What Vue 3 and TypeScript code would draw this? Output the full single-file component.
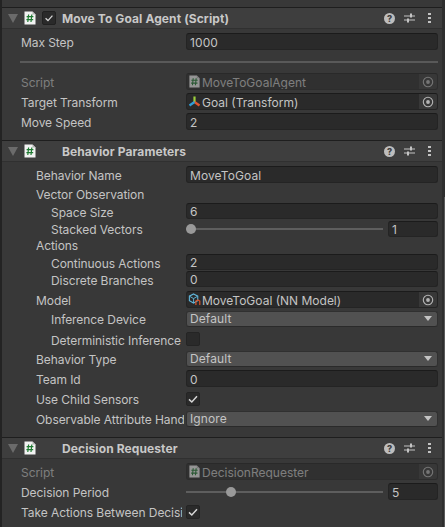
<template>
  <div class="inspector">
    <svg class="defs" width="0" height="0">
      <defs>
        <symbol id="script" viewBox="0 0 12 14">
          <path d="M0.5 0.5H8.5L11.5 3.5V13.5H0.5Z" fill="#f2f2f2" />
          <path d="M8.5 0.5V3.5H11.5Z" fill="#b5b5b5" />
          <path d="M4.6 3.5L3.8 11M7.8 3.5L7 11M2.6 5.7H9.4M2.4 8.7H9.2" stroke="#1f7a32" stroke-width="1.2" fill="none" />
        </symbol>
        <symbol id="target" viewBox="0 0 12 12">
          <circle cx="6" cy="6" r="4.7" fill="none" stroke="currentColor" stroke-width="1.1" />
          <circle cx="6" cy="6" r="1.9" fill="currentColor" />
        </symbol>
        <symbol id="transform" viewBox="0 0 13 13">
          <path d="M6.5 7V1.5" stroke="#9ccf3c" stroke-width="2.2" />
          <path d="M6.5 7L11.5 10.5" stroke="#e2562e" stroke-width="2.2" />
          <path d="M6.5 7L1.5 10.5" stroke="#2f9fd8" stroke-width="2.2" />
        </symbol>
        <symbol id="model" viewBox="0 0 14 14">
          <path d="M6 1L10.5 3.4V8.2L6 10.8L1.5 8.2V3.4Z" fill="none" stroke="#5fb4d8" stroke-width="1.2" />
          <path d="M1.5 3.4L6 6L10.5 3.4M6 6V10.8" fill="none" stroke="#5fb4d8" stroke-width="1" />
          <path d="M8.5 12.8V8.7L10.6 7.5L12.7 8.7V12.8" fill="none" stroke="#d9542b" stroke-width="1.3" />
        </symbol>
        <symbol id="sliders" viewBox="0 0 11 10">
          <path d="M0 3H11M0 7H11" stroke="#c4c4c4" stroke-width="1" />
          <path d="M7 0.5V4.5M4 5.5V9.5" stroke="#c4c4c4" stroke-width="2" />
        </symbol>
      </defs>
    </svg>

    <div class="content">
      <section v-for="comp in components" :key="comp.title" class="component" :class="comp.bodyClass">
        <header class="comp-header">
          <span class="fold"></span>
          <svg class="script-icon"><use href="#script" /></svg>
          <span class="enable">
            <svg v-if="comp.toggle" viewBox="0 0 14 14" class="tick"><path d="M3 7.4L5.8 10L11 4.2" /></svg>
          </span>
          <span class="title">{{ comp.title }}</span>
          <span class="help">?</span>
          <svg class="presets"><use href="#sliders" /></svg>
          <span class="menu"><i></i><i></i><i></i></span>
        </header>

        <div class="comp-body">
          <template v-for="row in comp.rows" :key="row.label">
            <div v-if="row.kind === 'sep'" class="sep"></div>
            <div v-else class="row" :class="[row.cls, 'k-' + row.kind, 'lv' + (row.level ?? comp.level), { dim: row.dim }]">
              <label class="label">{{ row.label }}</label>

              <div v-if="row.kind === 'input'" class="field">{{ row.value }}</div>

              <div v-else-if="row.kind === 'object'" class="field object">
                <svg class="obj-icon"><use :href="'#' + row.icon" /></svg>
                <span class="obj-name">{{ row.value }}</span>
                <span class="picker"><svg><use href="#target" /></svg></span>
              </div>

              <div v-else-if="row.kind === 'select'" class="select">
                <span>{{ row.value }}</span>
                <i class="caret"></i>
              </div>

              <div v-else-if="row.kind === 'check'" class="control">
                <span class="check">
                  <svg v-if="row.checked" viewBox="0 0 14 14" class="tick"><path d="M3 7.4L5.8 10L11 4.2" /></svg>
                </span>
              </div>

              <div v-else-if="row.kind === 'slider'" class="control slider">
                <div class="track">
                  <span class="thumb" :style="{ left: row.pos + 'px' }"></span>
                </div>
                <div class="field num">{{ row.value }}</div>
              </div>
            </div>
          </template>
        </div>
      </section>
    </div>

    <div class="scrollbar"><span class="scroll-thumb"></span></div>
  </div>
</template>

<script setup lang="ts">
type Row = {
  kind: 'input' | 'object' | 'select' | 'check' | 'slider' | 'heading' | 'sep'
  label: string
  value?: string
  icon?: string
  checked?: boolean
  pos?: number
  level?: number
  dim?: boolean
  cls?: string
}

type Comp = {
  title: string
  toggle: boolean
  level: number
  bodyClass: string
  rows: Row[]
}

const components: Comp[] = [
  {
    title: 'Move To Goal Agent (Script)',
    toggle: true,
    level: 0,
    bodyClass: 'agent',
    rows: [
      { kind: 'input', label: 'Max Step', value: '1000', cls: 'first' },
      { kind: 'sep', label: 'sep1' },
      { kind: 'object', label: 'Script', value: 'MoveToGoalAgent', icon: 'script', dim: true },
      { kind: 'object', label: 'Target Transform', value: 'Goal (Transform)', icon: 'transform' },
      { kind: 'input', label: 'Move Speed', value: '2' }
    ]
  },
  {
    title: 'Behavior Parameters',
    toggle: false,
    level: 1,
    bodyClass: 'behavior',
    rows: [
      { kind: 'input', label: 'Behavior Name', value: 'MoveToGoal', cls: 'first' },
      { kind: 'heading', label: 'Vector Observation' },
      { kind: 'input', label: 'Space Size', value: '6', level: 2, cls: 'sm m0' },
      { kind: 'slider', label: 'Stacked Vectors', value: '1', pos: 0, level: 2, cls: 'sm m2' },
      { kind: 'heading', label: 'Actions', cls: 'm0' },
      { kind: 'input', label: 'Continuous Actions', value: '2', level: 2, cls: 'sm m0' },
      { kind: 'input', label: 'Discrete Branches', value: '0', level: 2, cls: 'sm m1' },
      { kind: 'object', label: 'Model', value: 'MoveToGoal (NN Model)', icon: 'model', cls: 'm4' },
      { kind: 'select', label: 'Inference Device', value: 'Default', level: 2, cls: 'sm' },
      { kind: 'check', label: 'Deterministic Inference', checked: false, level: 2, cls: 'sm m4 low' },
      { kind: 'select', label: 'Behavior Type', value: 'Default', cls: 'sm m4' },
      { kind: 'input', label: 'Team Id', value: '0' },
      { kind: 'check', label: 'Use Child Sensors', checked: true, cls: 'sm m4' },
      { kind: 'select', label: 'Observable Attribute Handling', value: 'Ignore', cls: 'sm m4' }
    ]
  },
  {
    title: 'Decision Requester',
    toggle: false,
    level: 0,
    bodyClass: 'requester',
    rows: [
      { kind: 'object', label: 'Script', value: 'DecisionRequester', icon: 'script', dim: true, cls: 'first' },
      { kind: 'slider', label: 'Decision Period', value: '5', pos: 40 },
      { kind: 'check', label: 'Take Actions Between Decisions', checked: true }
    ]
  }
]
</script>

<style>
html, body { margin: 0; background: #383838; }
</style>

<style scoped>
.inspector {
  display: flex;
  height: 527px;
  box-sizing: border-box;
  overflow: hidden;
  background: #383838;
  border-left: 2px solid #232323;
  color: #c4c4c4;
  font-family: Inter, "Liberation Sans", sans-serif;
  font-size: 12px;
}
.defs { position: absolute; }
.content { flex: 1; min-width: 0; padding-top: 7px; }

.scrollbar {
  flex: none;
  display: flex;
  justify-content: flex-end;
  width: 3px;
  background: #2e2e2e;
}
.scroll-thumb {
  width: 1px;
  margin-top: 197px;
  background: #5a5a5a;
}

.comp-header {
  display: flex;
  align-items: center;
  height: 20px;
  border-top: 1px solid #1e1e1e;
  border-bottom: 1px solid #303030;
  background: #3e3e3e;
}
.fold {
  width: 0;
  height: 0;
  margin-left: 6px;
  border-left: 5px solid transparent;
  border-right: 5px solid transparent;
  border-top: 9px solid #6b6b6b;
}
.script-icon { width: 12px; height: 14px; margin-left: 6px; }
.enable {
  display: flex;
  width: 14px;
  height: 14px;
  margin-left: 6px;
  border-radius: 2px;
  box-sizing: border-box;
  border: 1px solid #212121;
  background: #2a2a2a;
}
.behavior .enable, .requester .enable { visibility: hidden; }
.tick { width: 100%; height: 100%; }
.tick path { fill: none; stroke: #d6d6d6; stroke-width: 1.5; }
.title { flex: 1; margin-left: 6px; font-weight: 700; color: #c8c8c8; letter-spacing: 0.1px; }
.help {
  width: 11px;
  height: 11px;
  border-radius: 50%;
  background: #bdbdbd;
  color: #3e3e3e;
  font-size: 9px;
  font-weight: 800;
  line-height: 11px;
  text-align: center;
}
.presets { width: 11px; height: 10px; margin-left: 9px; }
.menu {
  display: flex;
  flex-direction: column;
  gap: 2px;
  width: 3px;
  margin: 0 11px 0 13px;
}
.menu i { width: 3px; height: 2px; background: #c4c4c4; }

.comp-body { padding-bottom: 10px; }
.requester .comp-body { padding-bottom: 0; }

.row {
  display: flex;
  align-items: center;
  height: 17px;
  margin-top: 3px;
  padding-right: 4px;
}
.row.first { margin-top: 4px; }
.row.sm { height: 16px; }
.row.m0 { margin-top: 0; }
.row.m1 { margin-top: 1px; }
.row.m2 { margin-top: 2px; }
.row.m4 { margin-top: 4px; }
.row.dim { opacity: 0.5; }

.label {
  flex: none;
  box-sizing: border-box;
  margin-right: 2px;
  padding-top: 1px;
  overflow: hidden;
  white-space: nowrap;
  letter-spacing: -0.07px;
}
.row.sm .label, .k-heading .label { padding-top: 0; }
.row.sm.k-input .label, .row.sm.low .label { padding-top: 2px; }
.k-heading .label { margin-bottom: 1px; }
.lv0 .label { margin-left: 19px; width: 161px; margin-right: 4px; }
.lv1 .label { margin-left: 34px; width: 148px; }
.lv2 .label { margin-left: 49px; width: 133px; }

.sep {
  height: 2px;
  margin: 11px 4px 10px 18px;
  background: #595959;
}

.field {
  flex: 1;
  display: flex;
  align-items: center;
  box-sizing: border-box;
  height: 100%;
  padding-top: 1px;
  padding-left: 3px;
  border: 1px solid #242424;
  border-top-color: #1b1b1b;
  border-radius: 3px;
  background: #2a2a2a;
  letter-spacing: 0.1px;
}
.object { padding: 0 0 0 1px; overflow: hidden; }
.obj-icon { flex: none; width: 13px; height: 13px; margin-right: 1px; }
.obj-name { flex: 1; white-space: nowrap; padding-top: 1px; letter-spacing: 0; }
.picker {
  flex: none;
  display: flex;
  align-items: center;
  justify-content: center;
  width: 18px;
  height: 100%;
  background: #383838;
  color: #b4b4b4;
}
.picker svg { width: 12px; height: 12px; }

.select {
  flex: 1;
  display: flex;
  align-items: center;
  justify-content: space-between;
  box-sizing: border-box;
  height: 100%;
  padding: 0 5px 1px 3px;
  border: 1px solid #303030;
  border-bottom-color: #2a2a2a;
  border-radius: 3px;
  background: #515151;
  letter-spacing: 0.1px;
}
.caret {
  width: 0;
  height: 0;
  border-left: 4px solid transparent;
  border-right: 4px solid transparent;
  border-top: 5px solid #c4c4c4;
}

.control { flex: 1; display: flex; align-items: center; height: 100%; }
.check {
  width: 14px;
  height: 14px;
  box-sizing: border-box;
  border: 1px solid #242424;
  border-radius: 2px;
  background: #2a2a2a;
}
.check .tick { display: block; margin: -1px; width: 14px; height: 14px; }

.slider { gap: 5px; }
.track {
  position: relative;
  flex: 1;
  height: 2px;
  background: #5e5e5e;
}
.thumb {
  position: absolute;
  top: -4px;
  width: 10px;
  height: 10px;
  border-radius: 50%;
  background: #999;
}
.num { flex: none; width: 50px; }
</style>
